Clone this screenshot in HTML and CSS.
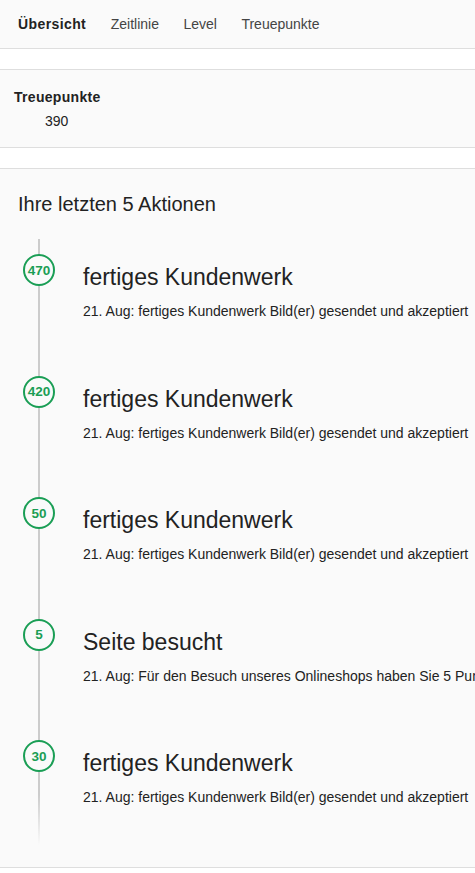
FILE: index.html
```html
<!DOCTYPE html>
<html lang="de">
<head>
<meta charset="utf-8">
<title>Übersicht</title>
<link rel="stylesheet" href="styles.css">
</head>
<body>
<nav class="nav">
  <a class="nav-item active">Übersicht</a>
  <a class="nav-item">Zeitlinie</a>
  <a class="nav-item">Level</a>
  <a class="nav-item">Treuepunkte</a>
</nav>
<section class="panel points">
  <div class="points-label">Treuepunkte</div>
  <div class="points-value">390</div>
</section>
<section class="panel actions">
  <h2 class="actions-title">Ihre letzten 5 Aktionen</h2>
  <div class="timeline">
    <div class="item">
      <div class="badge">470</div>
      <div class="content">
        <div class="title">fertiges Kundenwerk</div>
        <div class="desc">21. Aug: fertiges Kundenwerk Bild(er) gesendet und akzeptiert</div>
      </div>
    </div>
    <div class="item">
      <div class="badge">420</div>
      <div class="content">
        <div class="title">fertiges Kundenwerk</div>
        <div class="desc">21. Aug: fertiges Kundenwerk Bild(er) gesendet und akzeptiert</div>
      </div>
    </div>
    <div class="item">
      <div class="badge">50</div>
      <div class="content">
        <div class="title">fertiges Kundenwerk</div>
        <div class="desc">21. Aug: fertiges Kundenwerk Bild(er) gesendet und akzeptiert</div>
      </div>
    </div>
    <div class="item">
      <div class="badge">5</div>
      <div class="content">
        <div class="title">Seite besucht</div>
        <div class="desc">21. Aug: Für den Besuch unseres Onlineshops haben Sie 5 Punkte erhalten</div>
      </div>
    </div>
    <div class="item">
      <div class="badge">30</div>
      <div class="content">
        <div class="title">fertiges Kundenwerk</div>
        <div class="desc">21. Aug: fertiges Kundenwerk Bild(er) gesendet und akzeptiert</div>
      </div>
    </div>
  </div>
</section>
</body>
</html>
```

FILE: styles.css
```css
html, body {
  margin: 0;
  padding: 0;
  background: #ffffff;
  font-family: "Liberation Sans", Arial, sans-serif;
  color: #222222;
  overflow: hidden;
}

.nav {
  display: flex;
  align-items: center;
  height: 48px;
  padding-left: 18px;
  gap: 24.5px;
  background: #fafafa;
  border-bottom: 1px solid #dedede;
  white-space: nowrap;
}

.nav-item {
  font-size: 14px;
  line-height: 18px;
  color: #444444;
}

.nav-item.active {
  font-weight: bold;
  letter-spacing: 0.4px;
  color: #222222;
}

.panel {
  background: #fafafa;
  border-top: 1px solid #dedede;
  border-bottom: 1px solid #dedede;
  margin-top: 20px;
}

.points {
  padding: 18px 14px 17px;
}

.points-label {
  font-size: 14px;
  line-height: 18px;
  font-weight: bold;
  letter-spacing: 0.3px;
}

.points-value {
  font-size: 14px;
  line-height: 18px;
  margin-top: 6px;
  padding-left: 31px;
}

.actions {
  padding: 23px 0 22px 18px;
  white-space: nowrap;
  overflow: hidden;
}

.actions-title {
  margin: 0;
  font-size: 20px;
  line-height: 24px;
  font-weight: normal;
  color: #222222;
}

.timeline {
  position: relative;
  margin-top: 23px;
  padding-top: 15px;
}

.timeline::before {
  content: "";
  position: absolute;
  left: 20px;
  top: 0;
  bottom: 0;
  width: 2px;
  background: linear-gradient(to bottom, #cccccc 0, #cccccc calc(100% - 50px), rgba(204,204,204,0) 100%);
}

.item {
  display: flex;
  align-items: flex-start;
  height: 121.5px;
}

.item:last-child {
  height: 105px;
}

.badge {
  position: relative;
  box-sizing: border-box;
  flex: 0 0 32px;
  width: 32px;
  height: 32px;
  margin-left: 5px;
  border: 2px solid #1a9e55;
  border-radius: 50%;
  background: #fafafa;
  color: #1a9e55;
  font-size: 13.5px;
  font-weight: bold;
  display: flex;
  align-items: center;
  justify-content: center;
}

.content {
  margin-left: 28px;
  padding-top: 10px;
}

.title {
  font-size: 23px;
  line-height: 26px;
  color: #222222;
}

.desc {
  margin-top: 12px;
  font-size: 14px;
  line-height: 18px;
  color: #222222;
}
```
